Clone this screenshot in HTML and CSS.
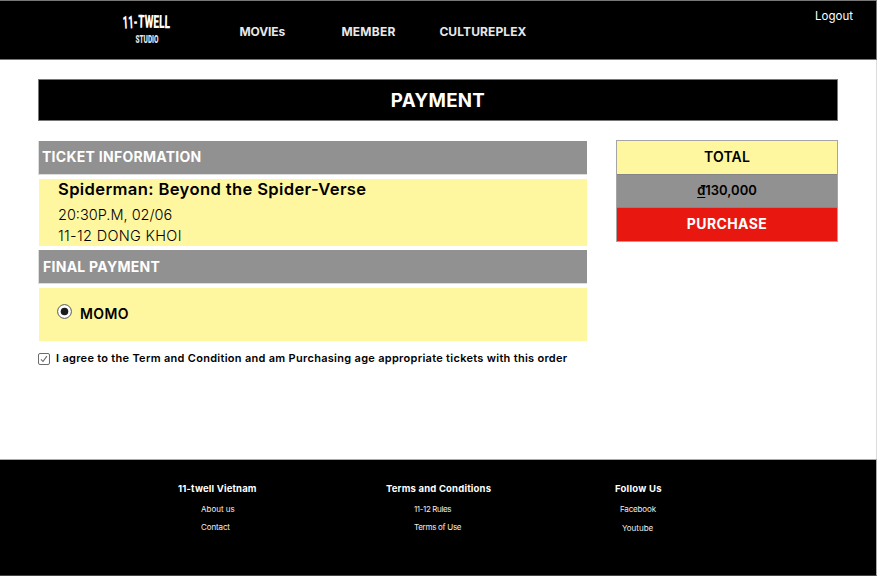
FILE: index.html
```html
<!DOCTYPE html>
<html lang="en">
<head>
<meta charset="utf-8">
<title>11-Twell Studio - Payment</title>
<link rel="stylesheet" href="styles.css">
</head>
<body>
<div class="page">
  <header class="header">
    <svg class="logo" viewBox="0 0 60 40" aria-label="11-Twell Studio">
      <g transform="translate(3 0)">
        <text class="logo-name" transform="rotate(-3 7 20) scale(1 1.4)" x="0" y="14.6" textLength="15" lengthAdjust="spacingAndGlyphs">11-</text>
        <text class="logo-name" transform="rotate(1 30 20) scale(1 1.4)" x="15" y="14.3" textLength="32" lengthAdjust="spacingAndGlyphs">TWELL</text>
        <text class="logo-sub" transform="scale(1 1.4)" x="12.5" y="25" textLength="23" lengthAdjust="spacingAndGlyphs">STUDIO</text>
      </g>
    </svg>
    <nav class="nav">
      <a class="nav-movies">MOVIEs</a>
      <a class="nav-member">MEMBER</a>
      <a class="nav-plex">CULTUREPLEX</a>
    </nav>
    <a class="logout">Logout</a>
  </header>

  <main class="main">
    <h1 class="title">PAYMENT</h1>
    <div class="columns">
      <section class="details">
        <h2 class="bar">TICKET INFORMATION</h2>
        <div class="ticket">
          <h3 class="movie">Spiderman: Beyond the Spider-Verse</h3>
          <p class="time">20:30P.M, 02/06</p>
          <p class="place">11-12 DONG KHOI</p>
        </div>
        <h2 class="bar">FINAL PAYMENT</h2>
        <div class="method">
          <svg class="radio" viewBox="0 0 15 15"><circle cx="7.5" cy="7.5" r="6.9" fill="#fff" stroke="#555" stroke-width="1"/><circle cx="7.5" cy="7.5" r="3.8" fill="#1c1c1c"/></svg>
          <span class="method-name">MOMO</span>
        </div>
        <div class="agree">
          <svg class="check" viewBox="0 0 12 12"><rect x=".5" y=".5" width="11" height="11" rx="1.5" fill="#fff" stroke="#6b6b6b"/><path d="M3 6.3 5 8.5 8.9 3.2" fill="none" stroke="#666" stroke-width="1.1"/></svg>
          <span>I agree to the Term and Condition and am Purchasing age appropriate tickets with this order</span>
        </div>
      </section>
      <aside class="summary">
        <div class="total">TOTAL</div>
        <div class="amount"><u>đ</u>130,000</div>
        <div class="purchase">PURCHASE</div>
      </aside>
    </div>
  </main>

  <footer class="footer">
    <div class="group company">
      <h4>11-twell Vietnam</h4>
      <ul><li class="about">About us</li><li class="contact">Contact</li></ul>
    </div>
    <div class="group terms">
      <h4>Terms and Conditions</h4>
      <ul><li class="rules">11-12 Rules</li><li class="use">Terms of Use</li></ul>
    </div>
    <div class="group follow">
      <h4>Follow Us</h4>
      <ul><li class="facebook">Facebook</li><li class="youtube">Youtube</li></ul>
    </div>
  </footer>
</div>
</body>
</html>
```
FILE: styles.css
```css
* { box-sizing: border-box; }
body { margin: 0; background: #fff; font-family: Inter, "Open Sans", sans-serif; color: #000; }
h1, h2, h3, h4, p, ul { margin: 0; padding: 0; }
ul { list-style: none; }
.page { width: 877px; height: 576px; border-right: 1px solid #dcdcdc; display: flex; flex-direction: column; white-space: nowrap; }

.header { height: 60px; margin-right: -1px; background: #000; border: 1px solid #777; border-left: 0; display: flex; align-items: flex-start; color: #fff; }
.logo { width: 60px; height: 40px; margin: 7px 0 0 120px; fill: #fff; overflow: visible; }
.logo-name { font: 900 13px Roboto, sans-serif; }
.logo-sub { font: 900 8px Roboto, sans-serif; fill: #e4e4e4; }
.nav { display: grid; grid-template-columns: 102px 98px 90px; margin: 21px 0 0 59.4px; font-size: 12px; font-weight: 700; line-height: 20px; color: #e8e8e8; }
.nav-movies { letter-spacing: -.1px; }
.nav-member { letter-spacing: .25px; }
.nav-plex { letter-spacing: .1px; }
.logout { margin: 5px 23px 0 auto; font-size: 11.5px; line-height: 20px; }

.main { height: 399px; padding: 19px 38px 0 38px; }
.title { height: 42px; border: 1px solid #777; background: #000; color: #fff; font-size: 18.7px; font-weight: 700; line-height: 42px; letter-spacing: .3px; text-align: center; }
.columns { display: flex; justify-content: space-between; margin-top: 19px; }
.details { width: 549px; padding: 1px 0 0 1px; }
.bar { height: 33px; padding-left: 3px; background: #919191; box-shadow: 0 0 0 1px #ddd; clip-path: inset(0 0 -1px -1px); color: #fff; font-size: 14px; font-weight: 700; line-height: 32px; letter-spacing: .27px; }
.ticket + .bar { padding-left: 4px; line-height: 33px; }
.ticket { height: 67px; margin: 5px 0 4px; padding-left: 19px; background: #fef7a0; }
.movie { font-size: 16.6px; font-weight: 600; line-height: 21px; letter-spacing: .36px; margin-bottom: 4px; }
.time, .place { font-size: 14.5px; font-weight: 300; line-height: 21px; }
.place { letter-spacing: .33px; }
.method { height: 53px; margin-top: 5px; padding-left: 18px; background: #fef7a0; display: flex; }
.radio { width: 15px; height: 15px; margin-top: 16px; }
.method-name { margin: 15px 0 0 8px; font-size: 14px; font-weight: 600; line-height: 21px; letter-spacing: .38px; }
.agree { display: flex; margin: 9px 0 0 -1px; font-size: 11px; font-weight: 600; line-height: 16px; letter-spacing: .29px; }
.check { width: 12px; height: 12px; margin: 3px 6px 0 0; }

.summary { width: 222px; height: 102px; border: 1px solid #a5a5a5; display: grid; grid-template-rows: 33px 34px 33px; text-align: center; line-height: 33px; font-size: 14px; font-weight: 600; }
.total { background: #fef7a0; line-height: 32px; letter-spacing: .19px; }
.amount { background: #919191; border: solid #858585; border-width: 1px 0; font-size: 13px; line-height: 31px; }
.amount u { text-decoration: underline; text-underline-offset: 2px; text-decoration-thickness: 1px; }
.purchase { background: #e81810; color: #fff; font-weight: 700; line-height: 32px; letter-spacing: .39px; }

.footer { height: 117px; margin-right: -1px; border: solid #aaa; border-width: 1px 1px 1px 0; border-bottom-color: #444; background: #000; color: #fff; display: flex; }
.group { padding-top: 22px; font-size: 8px; }
.group h4 { font-size: 9.5px; font-weight: 700; line-height: 14px; margin-bottom: 4px; }
.group li { line-height: 18px; color: #eee; }
.company { margin-left: 178px; width: 208px; }
.company h4 { letter-spacing: .15px; }
.company ul { padding-left: 23px; }
.contact { letter-spacing: -.12px; }
.terms { width: 229px; }
.terms h4 { letter-spacing: .18px; }
.terms ul { padding-left: 28px; }
.rules { letter-spacing: -.38px; }
.use { letter-spacing: -.29px; }
.follow h4 { letter-spacing: .24px; }
.follow ul { padding-left: 5px; }
.facebook { letter-spacing: -.16px; }
.group .youtube { padding-left: 2px; line-height: 20px; }
```
